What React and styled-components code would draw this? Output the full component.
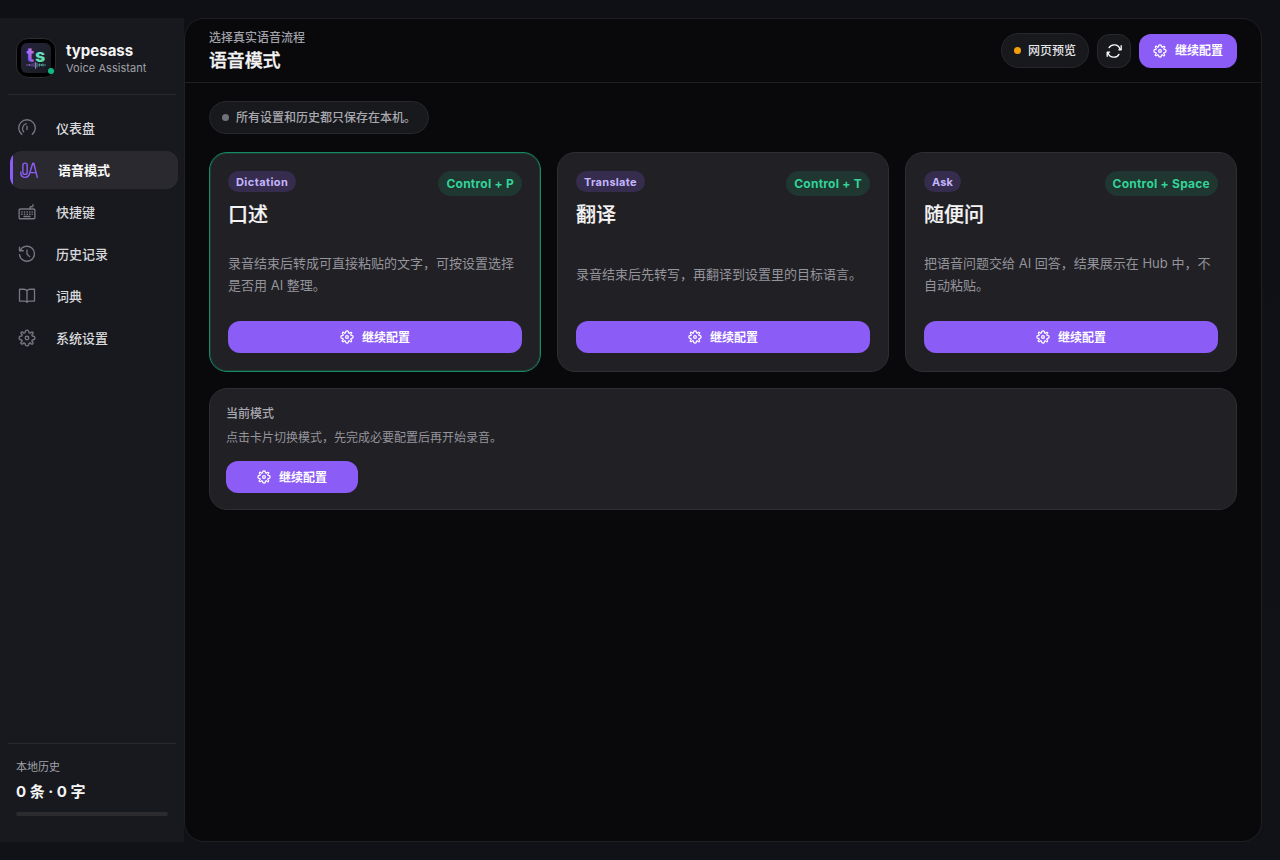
import { useState } from 'react'
import styled, { createGlobalStyle, css } from 'styled-components'

const GlobalStyle = createGlobalStyle`
    * {
        box-sizing: border-box;
    }
    body {
        margin: 0;
        background: #101117;
        color: #f4f4f5;
        font-family: Inter, 'Noto Sans CJK SC', sans-serif;
        font-size: 13px;
        -webkit-font-smoothing: antialiased;
    }
    button {
        font-family: inherit;
        cursor: pointer;
    }
    h1, h2, p {
        margin: 0;
    }
`

const Shell = styled.div`
    display: flex;
    width: 100%;
    height: 100vh;
    padding: 18px 18px 18px 0;
    background: linear-gradient(180deg, #0f1016 0%, #111218 100%);
`

const Sidebar = styled.aside`
    display: flex;
    flex-direction: column;
    width: 184px;
    flex-shrink: 0;
    padding: 0 8px;
    background: #18191e;
`

const Brand = styled.div`
    display: flex;
    align-items: center;
    gap: 10px;
    height: 77px;
    padding: 3px 8px 0;
    border-bottom: 1px solid #29292e;
`

const BrandText = styled.div`
    display: flex;
    flex-direction: column;
    padding-top: 3px;
`

const BrandName = styled.div`
    font-size: 15px;
    line-height: 18px;
    font-weight: 700;
`

const BrandSub = styled.div`
    font-size: 11px;
    line-height: 17px;
    letter-spacing: 0.05px;
    color: #a1a1aa;
`

const Nav = styled.nav`
    display: flex;
    flex-direction: column;
    gap: 4px;
    padding: 14px 0 0 2px;
    margin-right: -2px;
    flex: 1;
`

const NavItem = styled.button`
    display: flex;
    align-items: center;
    gap: 20px;
    height: 38px;
    padding: 0 8px;
    border: 0;
    border-radius: 12px;
    background: transparent;
    color: #d9d9dd;
    font-size: 13px;
    font-weight: 500;
    text-align: left;

    svg {
        color: #777780;
    }

    ${({ $active }) =>
        $active &&
        css`
            padding-left: 10px;
            background: linear-gradient(90deg, #8b5cf6 3px, #2a292f 3px);
            color: #fafafa;
            font-weight: 600;

            svg {
                color: #8b5cf6;
            }
        `}
`

const Label = styled.span`
    padding-bottom: 2px;
`

const Usage = styled.div`
    height: 99px;
    padding: 14px 8px 0;
    border-top: 1px solid #29292e;
`

const UsageLabel = styled.div`
    font-size: 11px;
    line-height: 18px;
    color: #a1a1aa;
`

const UsageValue = styled.div`
    margin-top: 4px;
    font-size: 15px;
    line-height: 24px;
    font-weight: 700;
`

const UsageBar = styled.div`
    height: 4px;
    margin-top: 8px;
    border-radius: 2px;
    background: #2a2a2f;
`

const Main = styled.main`
    display: flex;
    flex-direction: column;
    flex: 1;
    border: 1px solid #202023;
    border-radius: 20px;
    background: #09090b;
    overflow: hidden;
`

const Header = styled.header`
    display: flex;
    align-items: center;
    justify-content: space-between;
    height: 64px;
    padding: 0 24px;
    border-bottom: 1px solid #202023;
`

const Heading = styled.div`
    padding-top: 2px;
`

const Eyebrow = styled.p`
    font-size: 12px;
    line-height: 18px;
    font-weight: 500;
    color: #a1a1aa;
`

const PageTitle = styled.h1`
    font-size: 18px;
    line-height: 27px;
    font-weight: 500;
    letter-spacing: -0.18px;
    -webkit-text-stroke: 0.3px currentColor;
`

const Actions = styled.div`
    display: flex;
    align-items: center;
    gap: 8px;
`

const StatusPill = styled.div`
    display: inline-flex;
    align-items: center;
    gap: 7px;
    height: ${({ $height }) => $height}px;
    padding: 0 12px;
    border: 1px solid #29292d;
    border-radius: 999px;
    background: #18191c;
    color: ${({ $color }) => $color};
    font-size: 12px;
    font-weight: 500;
`

const Dot = styled.span`
    width: 7px;
    height: 7px;
    border-radius: 50%;
    background: ${({ $color }) => $color};
`

const IconButton = styled.button`
    display: flex;
    align-items: center;
    justify-content: center;
    width: 34px;
    height: 34px;
    padding: 0;
    border: 1px solid #29292d;
    border-radius: 12px;
    background: #18191c;
    color: #fafafa;
`

const PrimaryButton = styled.button`
    display: flex;
    align-items: center;
    justify-content: center;
    gap: 8px;
    width: ${({ $width }) => $width || '100%'};
    height: ${({ $tall }) => ($tall ? 34 : 32)}px;
    padding: 0;
    border: 0;
    border-radius: 12px;
    background: #8b5cf6;
    color: #fff;
    font-size: 12px;
    font-weight: 600;
`

const Content = styled.section`
    display: flex;
    flex-direction: column;
    align-items: flex-start;
    padding: 18px 24px;
`

const Cards = styled.div`
    display: grid;
    grid-template-columns: repeat(3, 1fr);
    gap: 16px;
    width: 100%;
    margin: 18px 0 16px;
`

const Card = styled.article`
    display: flex;
    flex-direction: column;
    height: 220px;
    padding: 18px;
    border: 1px solid ${({ $selected }) => ($selected ? '#168a63' : '#2e2e33')};
    border-radius: 18px;
    background: #212024;
    box-shadow: ${({ $selected }) => ($selected ? 'inset 0 0 0 1px rgba(16, 185, 129, 0.18)' : 'none')};
    cursor: pointer;
`

const CardHead = styled.div`
    display: flex;
    align-items: flex-start;
    justify-content: space-between;
`

const KindTag = styled.span`
    display: inline-flex;
    align-items: center;
    height: 21px;
    padding: 0 8px;
    border-radius: 999px;
    background: #352c4e;
    color: #c4b5fd;
    font-size: 11px;
    font-weight: 700;
    letter-spacing: ${({ $tracking }) => $tracking}px;
`

const Shortcut = styled.span`
    display: inline-flex;
    align-items: center;
    height: 25px;
    padding: 0 8px;
    border-radius: 999px;
    background: #1f3631;
    color: #34d399;
    font-size: 12px;
    font-weight: 700;
    letter-spacing: 0.24px;
`

const CardTitle = styled.h2`
    margin-top: 9px;
    font-size: 20px;
    line-height: 28px;
    font-weight: 500;
    -webkit-text-stroke: 0.2px currentColor;
`

const CardText = styled.p`
    display: flex;
    align-items: center;
    flex: 1;
    margin-bottom: 2px;
    font-size: 13px;
    line-height: 22px;
    color: #94949c;
`

const Panel = styled.div`
    width: 100%;
    height: 122px;
    padding: 16px;
    border: 1px solid #2e2e33;
    border-radius: 18px;
    background: #212024;
`

const PanelTitle = styled.p`
    font-size: 12px;
    line-height: 18px;
    font-weight: 500;
    color: #a9a9b1;
`

const PanelText = styled.p`
    margin: 5px 0 13px;
    font-size: 12px;
    line-height: 20px;
    color: #94949c;
`

function Icon({ size = 18, width = 1.8, children }) {
    return (
        <svg
            width={size}
            height={size}
            viewBox='0 0 24 24'
            fill='none'
            stroke='currentColor'
            strokeWidth={width}
            strokeLinecap='round'
            strokeLinejoin='round'
        >
            {children}
        </svg>
    )
}

function GearIcon({ size, width }) {
    return (
        <Icon size={size} width={width}>
            <path d='M9.7 3.2Q10 1.5 12 1.5T14.3 3.2L14.6 5L16 5.6L17.3 4.5Q18.6 3.6 19.7 4.3T19.5 6.7L18.4 8L19 9.4L20.8 9.7Q22.5 10 22.5 12T20.8 14.3L19 14.6L18.4 16L19.5 17.3Q20.4 18.6 19.7 19.7T17.3 19.5L16 18.4L14.6 19L14.3 20.8Q14 22.5 12 22.5T9.7 20.8L9.4 19L8 18.4L6.7 19.5Q5.4 20.4 4.3 19.7T4.5 17.3L5.6 16L5 14.6L3.2 14.3Q1.5 14 1.5 12T3.2 9.7L5 9.4L5.6 8L4.5 6.7Q3.6 5.4 4.3 4.3T6.7 4.5L8 5.6L9.4 5Z' />
            <circle cx='12' cy='12' r='2.4' />
        </Icon>
    )
}

function RefreshIcon() {
    return (
        <Icon size={16} width={2}>
            <path d='M4.6 7A9 9 0 0 1 21 9.6M22.8 4V10.2H19.2' />
            <path d='M19.4 17A9 9 0 0 1 3 14.4M1.8 20V13.8H5.4' />
        </Icon>
    )
}

function GaugeIcon() {
    return (
        <Icon>
            <path d='M5 20.5A11 11 0 1 1 19 20.5M7.5 17.2A7 7 0 0 1 11 6.2M12 9.5V14' />
        </Icon>
    )
}

function VoiceIcon() {
    return (
        <Icon width={1.9}>
            <rect x='3.8' y='2.8' width='5.8' height='15' rx='2.9' />
            <path d='M1 14.5C1 19.5 3 21.8 6.8 21.8S12.2 19.5 13 16L17 3H18.4L23 21.8M14.2 15.5H21' />
        </Icon>
    )
}

function KeyboardIcon() {
    return (
        <Icon>
            <rect x='1.5' y='8' width='21' height='13' rx='1.5' />
            <path d='M16 8V6Q16 5 17.5 5H18.5Q20 5 20 3.5V2.2M5 12H5.5M8.5 12H9M12 12H12.5M15.5 12H16M18.8 12H19M5 15H5.5M8.5 15H9M12 15H12.5M15.5 15H16M18.8 15H19M8 18H16' />
        </Icon>
    )
}

function HistoryIcon() {
    return (
        <Icon>
            <path d='M2.8 7.5A10 10 0 1 1 2 13M2 2.8V7.7H7M12 6.5V12L15.5 15.5' />
        </Icon>
    )
}

function BookIcon() {
    return (
        <Icon>
            <path d='M12 5Q10.5 3 8 3H2V18.8H9Q11.3 18.8 12 20.5Q12.7 18.8 15 18.8H22V3H16Q13.5 3 12 5V20.5' />
        </Icon>
    )
}

function Logo() {
    return (
        <svg width='40' height='40' viewBox='0 0 40 40'>
            <defs>
                <linearGradient id='tile' x1='0' y1='0' x2='1' y2='1'>
                    <stop offset='0' stopColor='#29203f' />
                    <stop offset='0.5' stopColor='#20222f' />
                    <stop offset='1' stopColor='#15191f' />
                </linearGradient>
                <linearGradient id='letterT' x1='0' y1='0' x2='0' y2='1'>
                    <stop offset='0' stopColor='#c587f5' />
                    <stop offset='1' stopColor='#8448ed' />
                </linearGradient>
                <linearGradient id='letterS' x1='0' y1='0' x2='0' y2='1'>
                    <stop offset='0' stopColor='#65d9df' />
                    <stop offset='1' stopColor='#61dda0' />
                </linearGradient>
            </defs>
            <rect x='0.5' y='0.5' width='39' height='39' rx='11.5' fill='#000' stroke='#2c2c31' />
            <rect x='5' y='5' width='30' height='30' rx='6' fill='url(#tile)' />
            <text x='10.6' y='23.5' fontFamily='Inter, sans-serif' fontSize='20' fontWeight='800' fill='url(#letterT)'>t</text>
            <text x='19' y='23.5' fontFamily='Inter, sans-serif' fontSize='18' fontWeight='800' fill='url(#letterS)'>s</text>
            <path d='M10 27H15M13.5 26V28M16 25.5V28.5M18 25V29' stroke='#9361cd' strokeWidth='0.8' />
            <path d='M19.5 24V31M21 25V29.5' stroke='#8091bd' strokeWidth='0.9' />
            <path d='M22 27H30M23.5 25.5V28.5M25.5 26V28M27 25.5V28.5' stroke='#51a99a' strokeWidth='0.8' />
            <circle cx='35' cy='33' r='3' fill='#10b981' />
        </svg>
    )
}

const navItems = [
    { id: 'dashboard', label: '仪表盘', icon: GaugeIcon },
    { id: 'voice', label: '语音模式', icon: VoiceIcon },
    { id: 'keys', label: '快捷键', icon: KeyboardIcon },
    { id: 'history', label: '历史记录', icon: HistoryIcon },
    { id: 'dict', label: '词典', icon: BookIcon },
    { id: 'settings', label: '系统设置', icon: GearIcon },
]

const modes = [
    {
        id: 'Dictation',
        tracking: 0.42,
        title: '口述',
        shortcut: 'Control + P',
        text: '录音结束后转成可直接粘贴的文字，可按设置选择是否用 AI 整理。',
    },
    {
        id: 'Translate',
        tracking: 0.28,
        title: '翻译',
        shortcut: 'Control + T',
        text: '录音结束后先转写，再翻译到设置里的目标语言。',
    },
    {
        id: 'Ask',
        tracking: 0.1,
        title: '随便问',
        shortcut: 'Control + Space',
        text: '把语音问题交给 AI 回答，结果展示在 Hub 中，不自动粘贴。',
    },
]

function ConfigButton(props) {
    return (
        <PrimaryButton {...props}>
            <GearIcon size={14} width={2.1} />
            <Label>继续配置</Label>
        </PrimaryButton>
    )
}

function App() {
    const [page, setPage] = useState('voice')
    const [mode, setMode] = useState('Dictation')

    return (
        <>
            <GlobalStyle />
            <Shell>
                <Sidebar>
                    <Brand>
                        <Logo />
                        <BrandText>
                            <BrandName>typesass</BrandName>
                            <BrandSub>Voice Assistant</BrandSub>
                        </BrandText>
                    </Brand>
                    <Nav>
                        {navItems.map(({ id, label, icon: NavIcon }) => (
                            <NavItem key={id} $active={page === id} onClick={() => setPage(id)}>
                                <NavIcon />
                                <Label>{label}</Label>
                            </NavItem>
                        ))}
                    </Nav>
                    <Usage>
                        <UsageLabel>本地历史</UsageLabel>
                        <UsageValue>0 条 · 0 字</UsageValue>
                        <UsageBar />
                    </Usage>
                </Sidebar>
                <Main>
                    <Header>
                        <Heading>
                            <Eyebrow>选择真实语音流程</Eyebrow>
                            <PageTitle>语音模式</PageTitle>
                        </Heading>
                        <Actions>
                            <StatusPill $height={35} $color='#e4e4e7'>
                                <Dot $color='#f59e0b' />
                                <Label>网页预览</Label>
                            </StatusPill>
                            <IconButton aria-label='刷新'>
                                <RefreshIcon />
                            </IconButton>
                            <ConfigButton $width='98px' $tall />
                        </Actions>
                    </Header>
                    <Content>
                        <StatusPill $height={33} $color='#a9a9b1'>
                            <Dot $color='#71717a' />
                            <Label>所有设置和历史都只保存在本机。</Label>
                        </StatusPill>
                        <Cards>
                            {modes.map((item) => (
                                <Card key={item.id} $selected={mode === item.id} onClick={() => setMode(item.id)}>
                                    <CardHead>
                                        <div>
                                            <KindTag $tracking={item.tracking}>{item.id}</KindTag>
                                            <CardTitle>{item.title}</CardTitle>
                                        </div>
                                        <Shortcut>{item.shortcut}</Shortcut>
                                    </CardHead>
                                    <CardText>{item.text}</CardText>
                                    <ConfigButton />
                                </Card>
                            ))}
                        </Cards>
                        <Panel>
                            <PanelTitle>当前模式</PanelTitle>
                            <PanelText>点击卡片切换模式，先完成必要配置后再开始录音。</PanelText>
                            <ConfigButton $width='132px' />
                        </Panel>
                    </Content>
                </Main>
            </Shell>
        </>
    )
}

export default App
